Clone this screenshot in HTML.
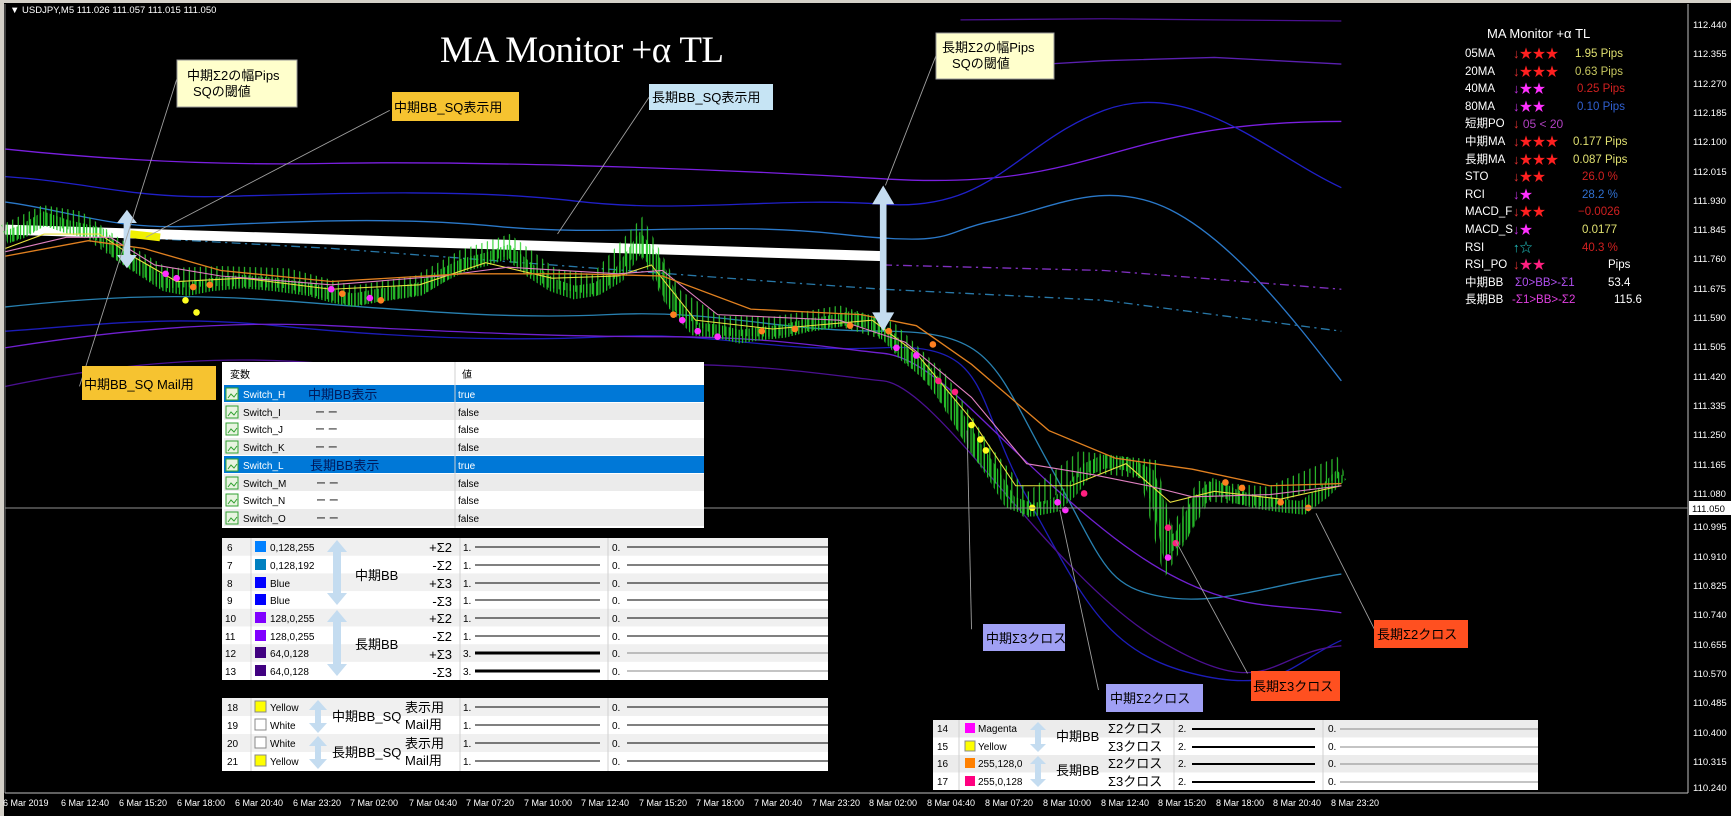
<!DOCTYPE html>
<html><head><meta charset="utf-8"><style>
html,body{margin:0;padding:0;background:#000;width:1731px;height:816px;overflow:hidden}
svg{display:block}
text{font-family:"Liberation Sans","Noto Sans CJK JP",sans-serif}
.t{font-size:10px;fill:#000}
.p{font-size:11.5px}
</style></head><body>
<svg width="1731" height="816" viewBox="0 0 1731 816" xmlns="http://www.w3.org/2000/svg">
<defs>
<pattern id="cd" width="3" height="7" patternUnits="userSpaceOnUse"><rect x="0" y="0" width="1.1" height="7" fill="#22c82a"/></pattern>
<pattern id="cd2" width="5" height="9" patternUnits="userSpaceOnUse"><rect x="1" y="0" width="1" height="9" fill="#30d030"/></pattern>
</defs>
<rect width="1731" height="816" fill="#000"/>
<rect x="0" y="0" width="1731" height="3" fill="#d4d0c8"/>
<rect x="0" y="0" width="4" height="816" fill="#d4d0c8"/>
<line x1="5" y1="4" x2="5" y2="793" stroke="#808080"/>
<line x1="1688" y1="4" x2="1688" y2="793" stroke="#c0c0c0"/>
<line x1="5" y1="793" x2="1688" y2="793" stroke="#c0c0c0"/>

<g transform="scale(1.104)" fill="none" stroke-width="1.2">
 <path d="M870,18 L1000,17 L1100,18 L1215,19" stroke="#4a1090"/>
 <path d="M880,62 L1000,55 L1100,52 L1215,58" stroke="#5a20b0"/>
 <path d="M5,135 C100,145 200,150 300,148 S600,150 800,162 S1000,110 1215,110" stroke="#7a1fe0"/>
 <path d="M5,160 C80,165 120,180 200,178 S420,170 520,182 S700,178 800,185 S920,130 1000,100 S1150,140 1215,170" stroke="#2020c8"/>
 <path d="M5,183 C60,190 100,208 170,205 S350,195 450,205 S650,200 760,212 S850,210 900,200 S1000,160 1060,190 S1180,300 1215,345" stroke="#2a78c8"/>
 <path d="M120,215 L300,225 L500,240 L700,255 L800,262 L1000,272 L1215,300" stroke="#2878a8" stroke-dasharray="8,4,2,4"/>
 <path d="M800,240 L1000,245 L1215,262" stroke="#8030c0" stroke-dasharray="8,4,2,4"/>
 <path d="M5,278 C80,270 150,265 250,272 S450,290 550,285 S700,300 800,300 S900,330 950,420 S1000,530 1050,540 S1150,530 1215,520" stroke="#2880b0"/>
 <path d="M5,300 C80,295 150,285 250,295 S450,310 550,305 S700,320 800,315 S880,360 930,450 S1000,590 1080,610 S1170,600 1215,580" stroke="#1c1cb8"/>
 <path d="M5,315 C100,300 200,290 300,295 S500,305 600,305 S750,315 800,320 S900,400 1000,480 S1150,545 1215,555" stroke="#7020d0"/>
 <path d="M5,350 C100,330 200,320 300,330 S500,330 600,330 S750,340 800,345 S950,520 1050,580 S1150,590 1215,585" stroke="#4a1090"/>
 <path d="M5,208 L800,232" stroke="#fff" stroke-width="9"/>
 <path d="M118,212 L145,215" stroke="#f0f000" stroke-width="7"/>
 <path d="M5,215 L20,210 L40,198 L60,205 L90,212 L110,232 L130,245 L150,258 L170,262 L190,258 L220,255 L250,258 L280,262 L300,268 L320,272 L340,268 L360,265 L380,262 L400,250 L420,240 L440,235 L460,228 L480,245 L500,258 L520,265 L540,262 L560,250 L580,220 L595,240 L610,275 L630,298 L650,300 L670,305 L690,302 L710,300 L730,295 L750,292 L770,288 L790,292 L805,305 L820,322 L840,338 L860,365 L880,400 L900,430 L915,455 L935,462 L955,458 L970,445 L985,425 L1000,418 L1020,420 L1040,430 L1052,465 L1058,495 L1070,485 L1085,455 L1100,440 L1120,450 L1140,455 L1160,458 L1180,460 L1200,445 L1215,430" stroke="url(#cd)" stroke-width="12"/>
 <path d="M5,212 L40,195 L70,200 L110,228 L150,252 L200,250 L260,252 L320,268 L380,258 L420,235 L460,222 L500,252 L540,258 L580,212 L610,270 L650,295 L700,296 L760,286 L805,300 L850,345 L890,410 L930,458 L980,418 L1040,425 L1058,500 L1090,445 L1150,450 L1215,422" stroke="url(#cd2)" stroke-width="18"/>
 <path d="M5,225 L40,212 L90,212 L120,232 L160,255 L220,252 L300,262 L380,258 L440,238 L500,252 L560,250 L590,240 L630,290 L700,298 L790,290 L830,320 L880,380 L920,440 L970,440 L1020,420 L1060,455 L1100,445 L1160,452 L1215,440" stroke="#e8e040" stroke-width="1"/>
 <path d="M5,228 L60,215 L100,215 L140,240 L200,250 L300,258 L400,250 L460,242 L560,248 L600,245 L650,285 L760,290 L820,310 L880,360 L930,420 L990,430 L1040,440 L1080,450 L1150,448 L1215,440" stroke="#e080c0" stroke-width="1"/>
 <path d="M5,232 L80,218 L130,225 L200,245 L300,255 L420,248 L520,248 L600,250 L680,280 L780,285 L830,295 L880,330 L950,390 L1010,415 L1080,425 L1150,440 L1215,438" stroke="#e08020" stroke-width="1.2"/>
 <g stroke="none">
  <circle cx="150" cy="248" r="3" fill="#ff30ff"/><circle cx="160" cy="252" r="3" fill="#ff30ff"/><circle cx="175" cy="260" r="3" fill="#ff8020"/>
  <circle cx="168" cy="272" r="3" fill="#ffff20"/><circle cx="178" cy="283" r="3" fill="#ffff20"/><circle cx="190" cy="258" r="3" fill="#ff8020"/>
  <circle cx="300" cy="262" r="3" fill="#ff30ff"/><circle cx="310" cy="266" r="3" fill="#ff8020"/><circle cx="335" cy="270" r="3" fill="#ff30ff"/>
  <circle cx="345" cy="272" r="3" fill="#ff8020"/><circle cx="610" cy="285" r="3" fill="#ff8020"/><circle cx="618" cy="290" r="3" fill="#ff30ff"/>
  <circle cx="632" cy="300" r="3" fill="#ff30ff"/><circle cx="650" cy="305" r="3" fill="#ff30ff"/><circle cx="690" cy="300" r="3" fill="#ff8020"/>
  <circle cx="720" cy="298" r="3" fill="#ff8020"/><circle cx="770" cy="295" r="3" fill="#ff8020"/><circle cx="805" cy="300" r="3" fill="#ff8020"/>
  <circle cx="812" cy="315" r="3" fill="#ff30ff"/><circle cx="830" cy="322" r="3" fill="#ff30ff"/><circle cx="845" cy="312" r="3" fill="#ff8020"/>
  <circle cx="850" cy="345" r="3" fill="#ff2080"/><circle cx="865" cy="355" r="3" fill="#ff2080"/><circle cx="880" cy="385" r="3" fill="#ffff20"/>
  <circle cx="888" cy="398" r="3" fill="#ffff20"/><circle cx="893" cy="408" r="3" fill="#ffff20"/><circle cx="935" cy="460" r="3" fill="#ffff20"/>
  <circle cx="958" cy="455" r="3" fill="#ff30ff"/><circle cx="965" cy="462" r="3" fill="#ff30ff"/><circle cx="982" cy="447" r="3" fill="#ff2080"/>
  <circle cx="1058" cy="478" r="3" fill="#ff2080"/><circle cx="1065" cy="492" r="3" fill="#ff2080"/><circle cx="1058" cy="505" r="3" fill="#ff30ff"/>
  <circle cx="1110" cy="437" r="3" fill="#ff8020"/><circle cx="1125" cy="442" r="3" fill="#ff8020"/><circle cx="1160" cy="455" r="3" fill="#ff8020"/>
  <circle cx="1185" cy="460" r="3" fill="#ff8020"/>
 </g>
 <g fill="#c4dcf0" stroke="none">
  <polygon points="115,190 124,202 118,202 118,231 124,231 115,243 106,231 112,231 112,202 106,202"/>
  <polygon points="800,168 810,185 803,185 803,283 810,283 800,300 790,283 797,283 797,185 790,185"/>
 </g>
 <g stroke="#a0a0a0" stroke-width="0.8">
  <line x1="160" y1="72" x2="72" y2="350"/>
  <line x1="353" y1="100" x2="132" y2="215"/>
  <line x1="588" y1="88" x2="505" y2="212"/>
  <line x1="848" y1="50" x2="802" y2="168"/>
  <line x1="880" y1="570" x2="876" y2="390"/>
  <line x1="995" y1="625" x2="960" y2="462"/>
  <line x1="1130" y1="610" x2="1065" y2="490"/>
  <line x1="1245" y1="570" x2="1192" y2="465"/>
 </g>
</g>
<line x1="5" y1="508" x2="1688" y2="508" stroke="#909090"/>

<text x="10" y="13" font-size="9.5" fill="#fff">▼ USDJPY,M5  111.026 111.057 111.015 111.050</text>
<text x="440" y="62" font-size="37" fill="#fff" style="font-family:'Liberation Serif',serif" textLength="284">MA Monitor +α TL</text>

<rect x="177" y="60" width="120" height="47" fill="#ffffcc" stroke="#999"/>
<text x="187" y="80" font-size="13" fill="#000">中期Σ2の幅Pips</text>
<text x="193" y="96" font-size="13" fill="#000">SQの閾値</text>
<rect x="392" y="92" width="127" height="29" fill="#f6c330"/>
<text x="394" y="112" font-size="13" fill="#000">中期BB_SQ表示用</text>
<rect x="649" y="84" width="124" height="26" fill="#c6e4f4"/>
<text x="652" y="102" font-size="13" fill="#000">長期BB_SQ表示用</text>
<rect x="936" y="33" width="118" height="46" fill="#ffffcc" stroke="#999"/>
<text x="942" y="52" font-size="13" fill="#000">長期Σ2の幅Pips</text>
<text x="952" y="68" font-size="13" fill="#000">SQの閾値</text>
<rect x="82" y="366" width="134" height="34" fill="#f6c330"/>
<text x="84" y="389" font-size="13" fill="#000">中期BB_SQ Mail用</text>

<rect x="983" y="624" width="82" height="27" fill="#a0a0f4"/>
<text x="986" y="643" font-size="13" fill="#000">中期Σ3クロス</text>
<rect x="1106" y="684" width="97" height="28" fill="#a0a0f4"/>
<text x="1110" y="703" font-size="13" fill="#000">中期Σ2クロス</text>
<rect x="1251" y="671" width="89" height="30" fill="#ff5020"/>
<text x="1253" y="691" font-size="13" fill="#000">長期Σ3クロス</text>
<rect x="1374" y="620" width="94" height="28" fill="#ff5020"/>
<text x="1377" y="639" font-size="13" fill="#000">長期Σ2クロス</text>

<!-- params table -->
<rect x="222" y="362" width="482" height="166" fill="#fff"/>
<text x="230" y="378" class="t">変数</text><text x="462" y="378" class="t">値</text>
<g>
<rect x="224" y="385" width="480" height="17" fill="#0078d7"/>
<rect x="224" y="403" width="480" height="17" fill="#ebebeb"/>
<rect x="224" y="438" width="480" height="17" fill="#ebebeb"/>
<rect x="224" y="456" width="480" height="17" fill="#0078d7"/>
<rect x="224" y="474" width="480" height="17" fill="#ebebeb"/>
<rect x="224" y="509" width="480" height="17" fill="#ebebeb"/>
</g>
<line x1="455" y1="362" x2="455" y2="528" stroke="#d0d0d0"/>
<g fill="#e8f4e0" stroke="#30a030"><rect x="226" y="388" width="12" height="12"/><rect x="226" y="406" width="12" height="12"/><rect x="226" y="423" width="12" height="12"/><rect x="226" y="441" width="12" height="12"/><rect x="226" y="459" width="12" height="12"/><rect x="226" y="477" width="12" height="12"/><rect x="226" y="494" width="12" height="12"/><rect x="226" y="512" width="12" height="12"/></g>
<g stroke="#30a030" fill="none"><path d="M228,398 l3,-4 l3,3 l3,-4"/><path d="M228,416 l3,-4 l3,3 l3,-4"/><path d="M228,433 l3,-4 l3,3 l3,-4"/><path d="M228,451 l3,-4 l3,3 l3,-4"/><path d="M228,469 l3,-4 l3,3 l3,-4"/><path d="M228,487 l3,-4 l3,3 l3,-4"/><path d="M228,504 l3,-4 l3,3 l3,-4"/><path d="M228,522 l3,-4 l3,3 l3,-4"/></g>
<g class="t" font-size="10.5">
<text x="243" y="398" fill="#fff">Switch_H</text><text x="308" y="399" font-size="13" fill="#001a5c">中期BB表示</text><text x="458" y="398" fill="#fff">true</text>
<text x="243" y="416">Switch_I</text><text x="315" y="416">ー ー</text><text x="458" y="416">false</text>
<text x="243" y="433">Switch_J</text><text x="315" y="433">ー ー</text><text x="458" y="433">false</text>
<text x="243" y="451">Switch_K</text><text x="315" y="451">ー ー</text><text x="458" y="451">false</text>
<text x="243" y="469" fill="#fff">Switch_L</text><text x="310" y="470" font-size="13" fill="#001a5c">長期BB表示</text><text x="458" y="469" fill="#fff">true</text>
<text x="243" y="487">Switch_M</text><text x="316" y="487">ー ー</text><text x="458" y="487">false</text>
<text x="243" y="504">Switch_N</text><text x="316" y="504">ー ー</text><text x="458" y="504">false</text>
<text x="243" y="522">Switch_O</text><text x="316" y="522">ー ー</text><text x="458" y="522">false</text>
</g>

<!-- table 2 -->
<rect x="222" y="538" width="606" height="142" fill="#fff"/>
<g fill="#f0f0f0"><rect x="222" y="538" width="606" height="17.7"/><rect x="222" y="573.4" width="606" height="17.7"/><rect x="222" y="608.8" width="606" height="17.7"/><rect x="222" y="644.2" width="606" height="17.7"/></g>
<g stroke="#d0d0d0"><line x1="251" y1="538" x2="251" y2="680"/><line x1="460" y1="538" x2="460" y2="680"/><line x1="608" y1="538" x2="608" y2="680"/></g>
<g fill="#c4dcf0"><polygon points="337,540 347,552 341,552 341,593 347,593 337,605 327,593 333,593 333,552 327,552"/><polygon points="337,610 347,622 341,622 341,664 347,664 337,676 327,664 333,664 333,622 327,622"/></g>
<g class="t">
<text x="227" y="551">6</text><rect x="255" y="541" width="11" height="11" fill="#0080ff"/><text x="270" y="551">0,128,255</text><text x="452" y="552" font-size="13" text-anchor="end">+Σ2</text>
<text x="227" y="569">7</text><rect x="255" y="559" width="11" height="11" fill="#0080c0"/><text x="270" y="569">0,128,192</text><text x="452" y="570" font-size="13" text-anchor="end">-Σ2</text>
<text x="227" y="587">8</text><rect x="255" y="577" width="11" height="11" fill="#0000ff"/><text x="270" y="587">Blue</text><text x="452" y="588" font-size="13" text-anchor="end">+Σ3</text>
<text x="227" y="604">9</text><rect x="255" y="594" width="11" height="11" fill="#0000ff"/><text x="270" y="604">Blue</text><text x="452" y="606" font-size="13" text-anchor="end">-Σ3</text>
<text x="225" y="622">10</text><rect x="255" y="612" width="11" height="11" fill="#8000ff"/><text x="270" y="622">128,0,255</text><text x="452" y="623" font-size="13" text-anchor="end">+Σ2</text>
<text x="225" y="640">11</text><rect x="255" y="630" width="11" height="11" fill="#8000ff"/><text x="270" y="640">128,0,255</text><text x="452" y="641" font-size="13" text-anchor="end">-Σ2</text>
<text x="225" y="657">12</text><rect x="255" y="647" width="11" height="11" fill="#400080"/><text x="270" y="657">64,0,128</text><text x="452" y="659" font-size="13" text-anchor="end">+Σ3</text>
<text x="225" y="675">13</text><rect x="255" y="665" width="11" height="11" fill="#400080"/><text x="270" y="675">64,0,128</text><text x="452" y="677" font-size="13" text-anchor="end">-Σ3</text>
<text x="355" y="580" font-size="13">中期BB</text><text x="355" y="649" font-size="13">長期BB</text>
<text x="463" y="551">1.</text><text x="463" y="569">1.</text><text x="463" y="587">1.</text><text x="463" y="604">1.</text><text x="463" y="622">1.</text><text x="463" y="640">1.</text><text x="463" y="657">3.</text><text x="463" y="675">3.</text>
<text x="612" y="551">0.</text><text x="612" y="569">0.</text><text x="612" y="587">0.</text><text x="612" y="604">0.</text><text x="612" y="622">0.</text><text x="612" y="640">0.</text><text x="612" y="657">0.</text><text x="612" y="675">0.</text>
</g>
<g stroke="#000"><line x1="475" y1="547" x2="600" y2="547"/><line x1="475" y1="565" x2="600" y2="565"/><line x1="475" y1="583" x2="600" y2="583"/><line x1="475" y1="600" x2="600" y2="600"/><line x1="475" y1="618" x2="600" y2="618"/><line x1="475" y1="636" x2="600" y2="636"/><line x1="475" y1="653" x2="600" y2="653" stroke-width="3"/><line x1="475" y1="671" x2="600" y2="671" stroke-width="3"/>
<line x1="627" y1="547" x2="828" y2="547"/><line x1="627" y1="565" x2="828" y2="565"/><line x1="627" y1="583" x2="828" y2="583"/><line x1="627" y1="600" x2="828" y2="600"/><line x1="627" y1="618" x2="828" y2="618"/><line x1="627" y1="636" x2="828" y2="636"/><line x1="627" y1="653" x2="828" y2="653" stroke="#888"/><line x1="627" y1="671" x2="828" y2="671" stroke="#888"/></g>

<!-- table 3 -->
<rect x="222" y="698" width="606" height="73" fill="#fff"/>
<g fill="#f0f0f0"><rect x="222" y="698" width="606" height="18"/><rect x="222" y="734" width="606" height="18"/></g>
<g stroke="#d0d0d0"><line x1="251" y1="698" x2="251" y2="771"/><line x1="460" y1="698" x2="460" y2="771"/><line x1="608" y1="698" x2="608" y2="771"/></g>
<g fill="#c4dcf0"><polygon points="318,700 327,710 321,710 321,723 327,723 318,733 309,723 315,723 315,710 309,710"/><polygon points="318,736 327,746 321,746 321,759 327,759 318,769 309,759 315,759 315,746 309,746"/></g>
<g class="t">
<text x="227" y="711">18</text><rect x="255" y="701" width="11" height="11" fill="#ffff00" stroke="#888"/><text x="270" y="711">Yellow</text>
<text x="227" y="729">19</text><rect x="255" y="719" width="11" height="11" fill="#fff" stroke="#888"/><text x="270" y="729">White</text>
<text x="227" y="747">20</text><rect x="255" y="737" width="11" height="11" fill="#fff" stroke="#888"/><text x="270" y="747">White</text>
<text x="227" y="765">21</text><rect x="255" y="755" width="11" height="11" fill="#ffff00" stroke="#888"/><text x="270" y="765">Yellow</text>
<text x="332" y="721" font-size="13">中期BB_SQ</text><text x="332" y="757" font-size="13">長期BB_SQ</text>
<text x="405" y="712" font-size="13">表示用</text><text x="405" y="729" font-size="13">Mail用</text><text x="405" y="748" font-size="13">表示用</text><text x="405" y="765" font-size="13">Mail用</text>
<text x="463" y="711">1.</text><text x="463" y="729">1.</text><text x="463" y="747">1.</text><text x="463" y="765">1.</text>
<text x="612" y="711">0.</text><text x="612" y="729">0.</text><text x="612" y="747">0.</text><text x="612" y="765">0.</text>
</g>
<g stroke="#000"><line x1="475" y1="707" x2="600" y2="707"/><line x1="475" y1="725" x2="600" y2="725"/><line x1="475" y1="743" x2="600" y2="743"/><line x1="475" y1="761" x2="600" y2="761"/><line x1="627" y1="707" x2="828" y2="707"/><line x1="627" y1="725" x2="828" y2="725"/><line x1="627" y1="743" x2="828" y2="743"/><line x1="627" y1="761" x2="828" y2="761"/></g>

<!-- table 4 -->
<rect x="933" y="720" width="605" height="70" fill="#fff"/>
<g fill="#ececec"><rect x="933" y="720" width="605" height="17.5"/><rect x="933" y="755" width="605" height="17.5"/></g>
<g stroke="#d0d0d0"><line x1="959" y1="720" x2="959" y2="790"/><line x1="1174" y1="720" x2="1174" y2="790"/><line x1="1323" y1="720" x2="1323" y2="790"/></g>
<g fill="#c4dcf0"><polygon points="1038,722 1046,730 1041,730 1041,744 1046,744 1038,752 1030,744 1035,744 1035,730 1030,730"/><polygon points="1038,756 1046,764 1041,764 1041,779 1046,779 1038,787 1030,779 1035,779 1035,764 1030,764"/></g>
<g class="t">
<text x="937" y="732">14</text><rect x="965" y="723" width="10" height="10" fill="#ff00ff"/><text x="978" y="732">Magenta</text>
<text x="937" y="750">15</text><rect x="965" y="741" width="10" height="10" fill="#ffff00" stroke="#888"/><text x="978" y="750">Yellow</text>
<text x="937" y="767">16</text><rect x="965" y="758" width="10" height="10" fill="#ff8000"/><text x="978" y="767">255,128,0</text>
<text x="937" y="785">17</text><rect x="965" y="776" width="10" height="10" fill="#ff0080"/><text x="978" y="785">255,0,128</text>
<text x="1056" y="741" font-size="13">中期BB</text><text x="1056" y="775" font-size="13">長期BB</text>
<text x="1108" y="733" font-size="13">Σ2クロス</text><text x="1108" y="751" font-size="13">Σ3クロス</text><text x="1108" y="768" font-size="13">Σ2クロス</text><text x="1108" y="786" font-size="13">Σ3クロス</text>
<text x="1178" y="732">2.</text><text x="1178" y="750">2.</text><text x="1178" y="767">2.</text><text x="1178" y="785">2.</text>
<text x="1328" y="732">0.</text><text x="1328" y="750">0.</text><text x="1328" y="767">0.</text><text x="1328" y="785">0.</text>
</g>
<g stroke="#000" stroke-width="2"><line x1="1192" y1="729" x2="1315" y2="729"/><line x1="1192" y1="747" x2="1315" y2="747"/><line x1="1192" y1="764" x2="1315" y2="764"/><line x1="1192" y1="782" x2="1315" y2="782"/></g>
<g stroke="#888"><line x1="1340" y1="729" x2="1538" y2="729"/><line x1="1340" y1="747" x2="1538" y2="747"/><line x1="1340" y1="764" x2="1538" y2="764"/><line x1="1340" y1="782" x2="1538" y2="782"/></g>

<!-- right panel -->
<text x="1487" y="38" fill="#fff" font-size="13">MA Monitor +α TL</text>
<g class="p" fill="#fff">
<text x="1465" y="57">05MA</text><text x="1465" y="75">20MA</text><text x="1465" y="92">40MA</text><text x="1465" y="110">80MA</text><text x="1465" y="127">短期PO</text><text x="1465" y="145">中期MA</text><text x="1465" y="163">長期MA</text><text x="1465" y="180">STO</text><text x="1465" y="198">RCI</text><text x="1465" y="215">MACD_F</text><text x="1465" y="233">MACD_S</text><text x="1465" y="251">RSI</text><text x="1465" y="268">RSI_PO</text><text x="1465" y="286">中期BB</text><text x="1465" y="303">長期BB</text>
</g>
<g font-size="13">
<text x="1513" y="58" fill="#e03030">↓<tspan fill="#ff2020">★★★</tspan></text>
<text x="1513" y="76" fill="#e03030">↓<tspan fill="#ff2020">★★★</tspan></text>
<text x="1513" y="93" fill="#c030e0">↓<tspan fill="#ff30ff">★★</tspan></text>
<text x="1513" y="111" fill="#c030e0">↓<tspan fill="#ff30ff">★★</tspan></text>
<text x="1513" y="128" fill="#e03030">↓<tspan fill="#b040c0" font-size="12"> 05 &lt; 20</tspan></text>
<text x="1513" y="146" fill="#e03030">↓<tspan fill="#ff2020">★★★</tspan></text>
<text x="1513" y="164" fill="#e03030">↓<tspan fill="#ff2020">★★★</tspan></text>
<text x="1513" y="181" fill="#e03030">↓<tspan fill="#ff2020">★★</tspan></text>
<text x="1513" y="199" fill="#c030e0">↓<tspan fill="#ff30ff">★</tspan></text>
<text x="1513" y="216" fill="#e03030">↓<tspan fill="#ff2020">★★</tspan></text>
<text x="1513" y="234" fill="#c030e0">↓<tspan fill="#ff30ff">★</tspan></text>
<text x="1513" y="252" fill="#20c0c0">↑<tspan>☆</tspan></text>
<text x="1513" y="269" fill="#e03030">↓<tspan fill="#ff2080">★★</tspan></text>
</g>
<g class="p">
<text x="1515" y="286" fill="#b050f0">Σ0&gt;BB&gt;-Σ1</text>
<text x="1512" y="303" fill="#e040e0">-Σ1&gt;BB&gt;-Σ2</text>
<text x="1575" y="57" fill="#e0e070">1.95 Pips</text>
<text x="1575" y="75" fill="#c8c860">0.63 Pips</text>
<text x="1577" y="92" fill="#d02020">0.25 Pips</text>
<text x="1577" y="110" fill="#3060d0">0.10 Pips</text>
<text x="1573" y="145" fill="#e0e070">0.177 Pips</text>
<text x="1573" y="163" fill="#e0e070">0.087 Pips</text>
<text x="1582" y="180" fill="#d02020">26.0 %</text>
<text x="1582" y="198" fill="#3070d0">28.2 %</text>
<text x="1578" y="215" fill="#d02020">−0.0026</text>
<text x="1582" y="233" fill="#e0e070">0.0177</text>
<text x="1582" y="251" fill="#d02020">40.3 %</text>
<text x="1608" y="268" fill="#fff">Pips</text>
<text x="1608" y="286" fill="#fff">53.4</text>
<text x="1614" y="303" fill="#fff">115.6</text>
</g>

<!-- price axis -->
<g font-size="9.5" fill="#fff">
<text x="1693" y="28">112.440</text><text x="1693" y="57">112.355</text><text x="1693" y="87">112.270</text><text x="1693" y="116">112.185</text><text x="1693" y="145">112.100</text><text x="1693" y="175">112.015</text><text x="1693" y="204">111.930</text><text x="1693" y="233">111.845</text><text x="1693" y="262">111.760</text><text x="1693" y="292">111.675</text><text x="1693" y="321">111.590</text><text x="1693" y="350">111.505</text><text x="1693" y="380">111.420</text><text x="1693" y="409">111.335</text><text x="1693" y="438">111.250</text><text x="1693" y="468">111.165</text><text x="1693" y="497">111.080</text><text x="1693" y="530">110.995</text><text x="1693" y="560">110.910</text><text x="1693" y="589">110.825</text><text x="1693" y="618">110.740</text><text x="1693" y="648">110.655</text><text x="1693" y="677">110.570</text><text x="1693" y="706">110.485</text><text x="1693" y="736">110.400</text><text x="1693" y="765">110.315</text><text x="1693" y="791">110.240</text>
</g>
<rect x="1689" y="501" width="42" height="14" fill="#fff"/>
<text x="1692" y="512" font-size="9.5" fill="#000">111.050</text>

<!-- time axis -->
<g font-size="9" fill="#fff">
<text x="3" y="806">6 Mar 2019</text><text x="61" y="806">6 Mar 12:40</text><text x="119" y="806">6 Mar 15:20</text><text x="177" y="806">6 Mar 18:00</text><text x="235" y="806">6 Mar 20:40</text><text x="293" y="806">6 Mar 23:20</text><text x="350" y="806">7 Mar 02:00</text><text x="409" y="806">7 Mar 04:40</text><text x="466" y="806">7 Mar 07:20</text><text x="524" y="806">7 Mar 10:00</text><text x="581" y="806">7 Mar 12:40</text><text x="639" y="806">7 Mar 15:20</text><text x="696" y="806">7 Mar 18:00</text><text x="754" y="806">7 Mar 20:40</text><text x="812" y="806">7 Mar 23:20</text><text x="869" y="806">8 Mar 02:00</text><text x="927" y="806">8 Mar 04:40</text><text x="985" y="806">8 Mar 07:20</text><text x="1043" y="806">8 Mar 10:00</text><text x="1101" y="806">8 Mar 12:40</text><text x="1158" y="806">8 Mar 15:20</text><text x="1216" y="806">8 Mar 18:00</text><text x="1273" y="806">8 Mar 20:40</text><text x="1331" y="806">8 Mar 23:20</text>
</g>
</svg>
</body></html>
